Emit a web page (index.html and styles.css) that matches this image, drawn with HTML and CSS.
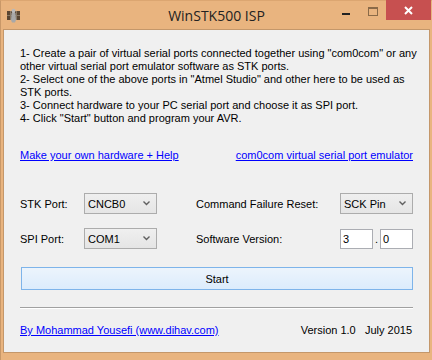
FILE: index.html
```html
<!DOCTYPE html>
<html lang="en">
<head>
    <meta charset="UTF-8">
    <title>WinSTK500 ISP</title>
    <link rel="stylesheet" href="styles.css">
</head>
<body>
    <div class="window">
        <div class="titlebar">
            <!-- app icon -->
            <svg class="app-icon" width="13" height="15" viewBox="0 0 13 15">
                <rect x="0" y="3" width="13" height="9" fill="#5a4632"/>
                <line x1="0" y1="7.5" x2="13" y2="7.5" stroke="#8a7a66" stroke-width="1"/>
                <line x1="3.5" y1="3" x2="3.5" y2="12" stroke="#8a7a66" stroke-width="1"/>
                <line x1="9.5" y1="3" x2="9.5" y2="12" stroke="#8a7a66" stroke-width="1"/>
                <ellipse cx="6.5" cy="3" rx="2" ry="2.2" fill="#b9b9b9"/>
                <path d="M4.5 5 L8.5 5 L9 12 L8 14.5 L5 14.5 L4 12 Z" fill="#a8a8a8"/>
            </svg>
            <div class="title">WinSTK500 ISP</div>
            <div class="controls">
                <span class="ctl-min"></span>
                <span class="ctl-max"></span>
                <span class="ctl-close">
                    <svg width="9" height="9" viewBox="0 0 9 9">
                        <path d="M1 1 L8 8 M8 1 L1 8" stroke="#fff" stroke-width="2"/>
                    </svg>
                </span>
            </div>
        </div>

        <div class="client">
            <div class="steps">
                1- Create a pair of virtual serial ports connected together using "com0com" or any
                other virtual serial port emulator software as STK ports.<br>
                2- Select one of the above ports in "Atmel Studio" and other here to be used as
                STK ports.<br>
                3- Connect hardware to your PC serial port and choose it as SPI port.<br>
                4- Click "Start" button and program your AVR.
            </div>

            <div class="links">
                <a href="#">Make your own hardware + Help</a>
                <a href="#">com0com virtual serial port emulator</a>
            </div>

            <div class="settings">
                <label>STK Port:</label>
                <div class="combo">
                    <select><option>CNCB0</option></select>
                    <svg class="arrow" width="7" height="5" viewBox="0 0 7 5"><path d="M0.5 0.5 L3.5 3.5 L6.5 0.5" fill="none" stroke="#606060" stroke-width="1.4"/></svg>
                </div>
                <span></span>
                <label>Command Failure Reset:</label>
                <div class="combo">
                    <select><option>SCK Pin</option></select>
                    <svg class="arrow" width="7" height="5" viewBox="0 0 7 5"><path d="M0.5 0.5 L3.5 3.5 L6.5 0.5" fill="none" stroke="#606060" stroke-width="1.4"/></svg>
                </div>

                <label>SPI Port:</label>
                <div class="combo">
                    <select><option>COM1</option></select>
                    <svg class="arrow" width="7" height="5" viewBox="0 0 7 5"><path d="M0.5 0.5 L3.5 3.5 L6.5 0.5" fill="none" stroke="#606060" stroke-width="1.4"/></svg>
                </div>
                <span></span>
                <label>Software Version:</label>
                <div class="version">
                    <input type="text" value="3">
                    <span class="dot">.</span>
                    <input type="text" value="0">
                </div>
            </div>

            <button class="start-btn">Start</button>

            <div class="separator"></div>

            <div class="footer">
                <a href="#">By Mohammad Yousefi (www.dihav.com)</a>
                <span>Version 1.0&nbsp;&nbsp; July 2015</span>
            </div>
        </div>
    </div>
</body>
</html>
```

FILE: styles.css
```css
body {
    margin: 0;
    font-family: "Liberation Sans", Arial, sans-serif;
    font-size: 11px;
}

.window {
    width: 432px;
    height: 360px;
    background-color: #e9b47f;
    box-sizing: border-box;
    border-left: 1px solid #c99868;
    border-top: 1px solid #dca671;
}

.titlebar {
    height: 28px;
    display: flex;
    align-items: flex-start;
    position: relative;
}

.app-icon {
    margin: 7px 0 0 6px;
}

.title {
    position: absolute;
    left: 0;
    right: 0;
    top: 5px;
    text-align: center;
    font-family: "Open Sans", sans-serif;
    font-size: 14px;
    color: #222;
}

.controls {
    margin-left: auto;
    display: flex;
    align-items: flex-start;
}

.ctl-min {
    width: 8px;
    height: 2px;
    background-color: #222;
    margin: 12px 0 0 0;
}

.ctl-max {
    width: 8px;
    height: 6px;
    border: 1px solid #8a6a48;
    border-top-width: 2px;
    margin: 6px 0 0 18px;
}

.ctl-close {
    width: 45px;
    height: 20px;
    margin: -1px 1px 0 8px;
    background-color: #c75050;
    display: flex;
    justify-content: center;
    align-items: center;
}

.client {
    margin: 0 2px 0 2px;
    height: 305px;
    background-color: #f0f0f0;
    border: 1px solid #c4976a;
    padding: 17px 16px 0 16px;
    box-sizing: content-box;
    color: #000;
}

.steps {
    line-height: 13px;
    width: 400px;
}

.links {
    display: flex;
    justify-content: space-between;
    margin-top: 24px;
    width: 393px;
    line-height: 13px;
}

a {
    color: #0000ff;
}

.settings {
    display: grid;
    grid-template-columns: 64px 73px 39px 144px 73px;
    grid-auto-rows: 21px;
    row-gap: 14px;
    align-items: center;
    margin-top: 31px;
}

.combo {
    position: relative;
    height: 21px;
}

.combo select {
    appearance: none;
    width: 73px;
    height: 21px;
    margin: 0;
    padding: 0 0 0 3px;
    border: 1px solid #acacac;
    border-radius: 0;
    background: linear-gradient(#efefef, #e5e5e5);
    font-family: "Liberation Sans", Arial, sans-serif;
    font-size: 11px;
    color: #000;
}

.combo .arrow {
    position: absolute;
    right: 7px;
    top: 8px;
    pointer-events: none;
}

.version {
    display: flex;
    align-items: center;
    height: 21px;
}

.version input {
    width: 33px;
    height: 20px;
    box-sizing: border-box;
    margin: 0;
    padding: 0 2px;
    border: 1px solid #abadb3;
    background-color: #fff;
    font-family: "Liberation Sans", Arial, sans-serif;
    font-size: 11px;
    outline: none;
}

.dot {
    width: 7px;
    text-align: center;
}

.start-btn {
    display: block;
    width: 392px;
    height: 23px;
    margin: 18px 0 0 1px;
    border: 1px solid #7eb4ea;
    background: linear-gradient(#ecf4fc, #dcecfc);
    font-family: "Liberation Sans", Arial, sans-serif;
    font-size: 11px;
    color: #000;
    padding: 0;
}

.separator {
    width: 393px;
    height: 1px;
    background-color: #a0a0a0;
    border-bottom: 1px solid #fff;
    margin-top: 17px;
}

.footer {
    display: flex;
    justify-content: space-between;
    width: 392px;
    margin-top: 15px;
    line-height: 13px;
}
```
